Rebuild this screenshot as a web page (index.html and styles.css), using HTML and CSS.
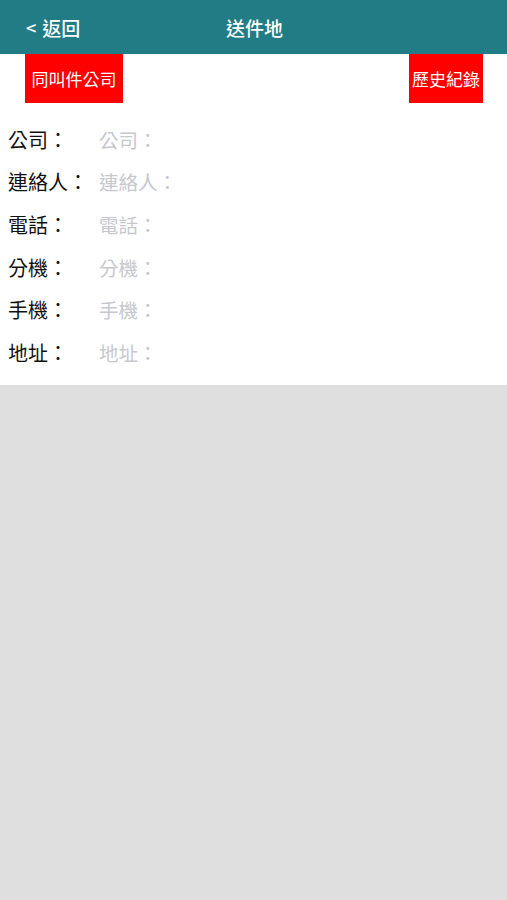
FILE: index.html
```html
<!DOCTYPE html>
<html lang="zh-Hant">
<head>
<meta charset="utf-8">
<title>送件地</title>
<link rel="stylesheet" href="styles.css">
</head>
<body>
<header class="topbar">
  <div class="back"><span class="chev">&lt;</span>返回</div>
  <div class="title">送件地</div>
  <div class="spacer"></div>
</header>
<main class="sheet">
  <div class="actions">
    <button class="btn btn-left">同叫件公司</button>
    <button class="btn btn-right">歷史紀錄</button>
  </div>
  <div class="form">
    <div class="row"><span class="label">公司：</span><span class="ph">公司：</span></div>
    <div class="row"><span class="label">連絡人：</span><span class="ph">連絡人：</span></div>
    <div class="row"><span class="label">電話：</span><span class="ph">電話：</span></div>
    <div class="row"><span class="label">分機：</span><span class="ph">分機：</span></div>
    <div class="row"><span class="label">手機：</span><span class="ph">手機：</span></div>
    <div class="row"><span class="label">地址：</span><span class="ph">地址：</span></div>
  </div>
</main>
</body>
</html>
```
FILE: styles.css
```css
html, body {
  margin: 0;
  padding: 0;
  height: 100%;
}
body {
  background: #dfdfdf;
  font-family: "Noto Sans CJK TC", "Noto Sans", sans-serif;
}
.topbar {
  height: 54px;
  background: #217c85;
  color: #fff;
  display: grid;
  grid-template-columns: 1fr auto 1fr;
  align-items: center;
  padding: 0 26px;
  box-sizing: border-box;
}
.back {
  font-size: 19px;
  font-weight: 500;
  display: flex;
  align-items: center;
}
.chev {
  font-size: 18px;
  margin-right: 6px;
}
.title {
  font-size: 19px;
  font-weight: 500;
  padding-left: 2px;
}
.sheet {
  background: #fff;
  padding-bottom: 11px;
}
.actions {
  display: flex;
  justify-content: space-between;
  padding: 0 24px 0 25px;
  height: 49px;
}
.btn {
  border: none;
  margin: 0;
  background: #fe0000;
  color: #fff;
  font-family: inherit;
  font-size: 17px;
  font-weight: 400;
  height: 49px;
  padding: 0 3px;
}
.btn-left {
  width: 98px;
}
.btn-right {
  width: 74px;
}
.form {
  padding: 15px 0 0 8px;
}
.row {
  height: 42.6px;
  display: flex;
  align-items: center;
  font-size: 20px;
}
.label {
  width: 91px;
  color: #111;
}
.ph {
  color: #c7c7cd;
  font-size: 19.5px;
}
```
